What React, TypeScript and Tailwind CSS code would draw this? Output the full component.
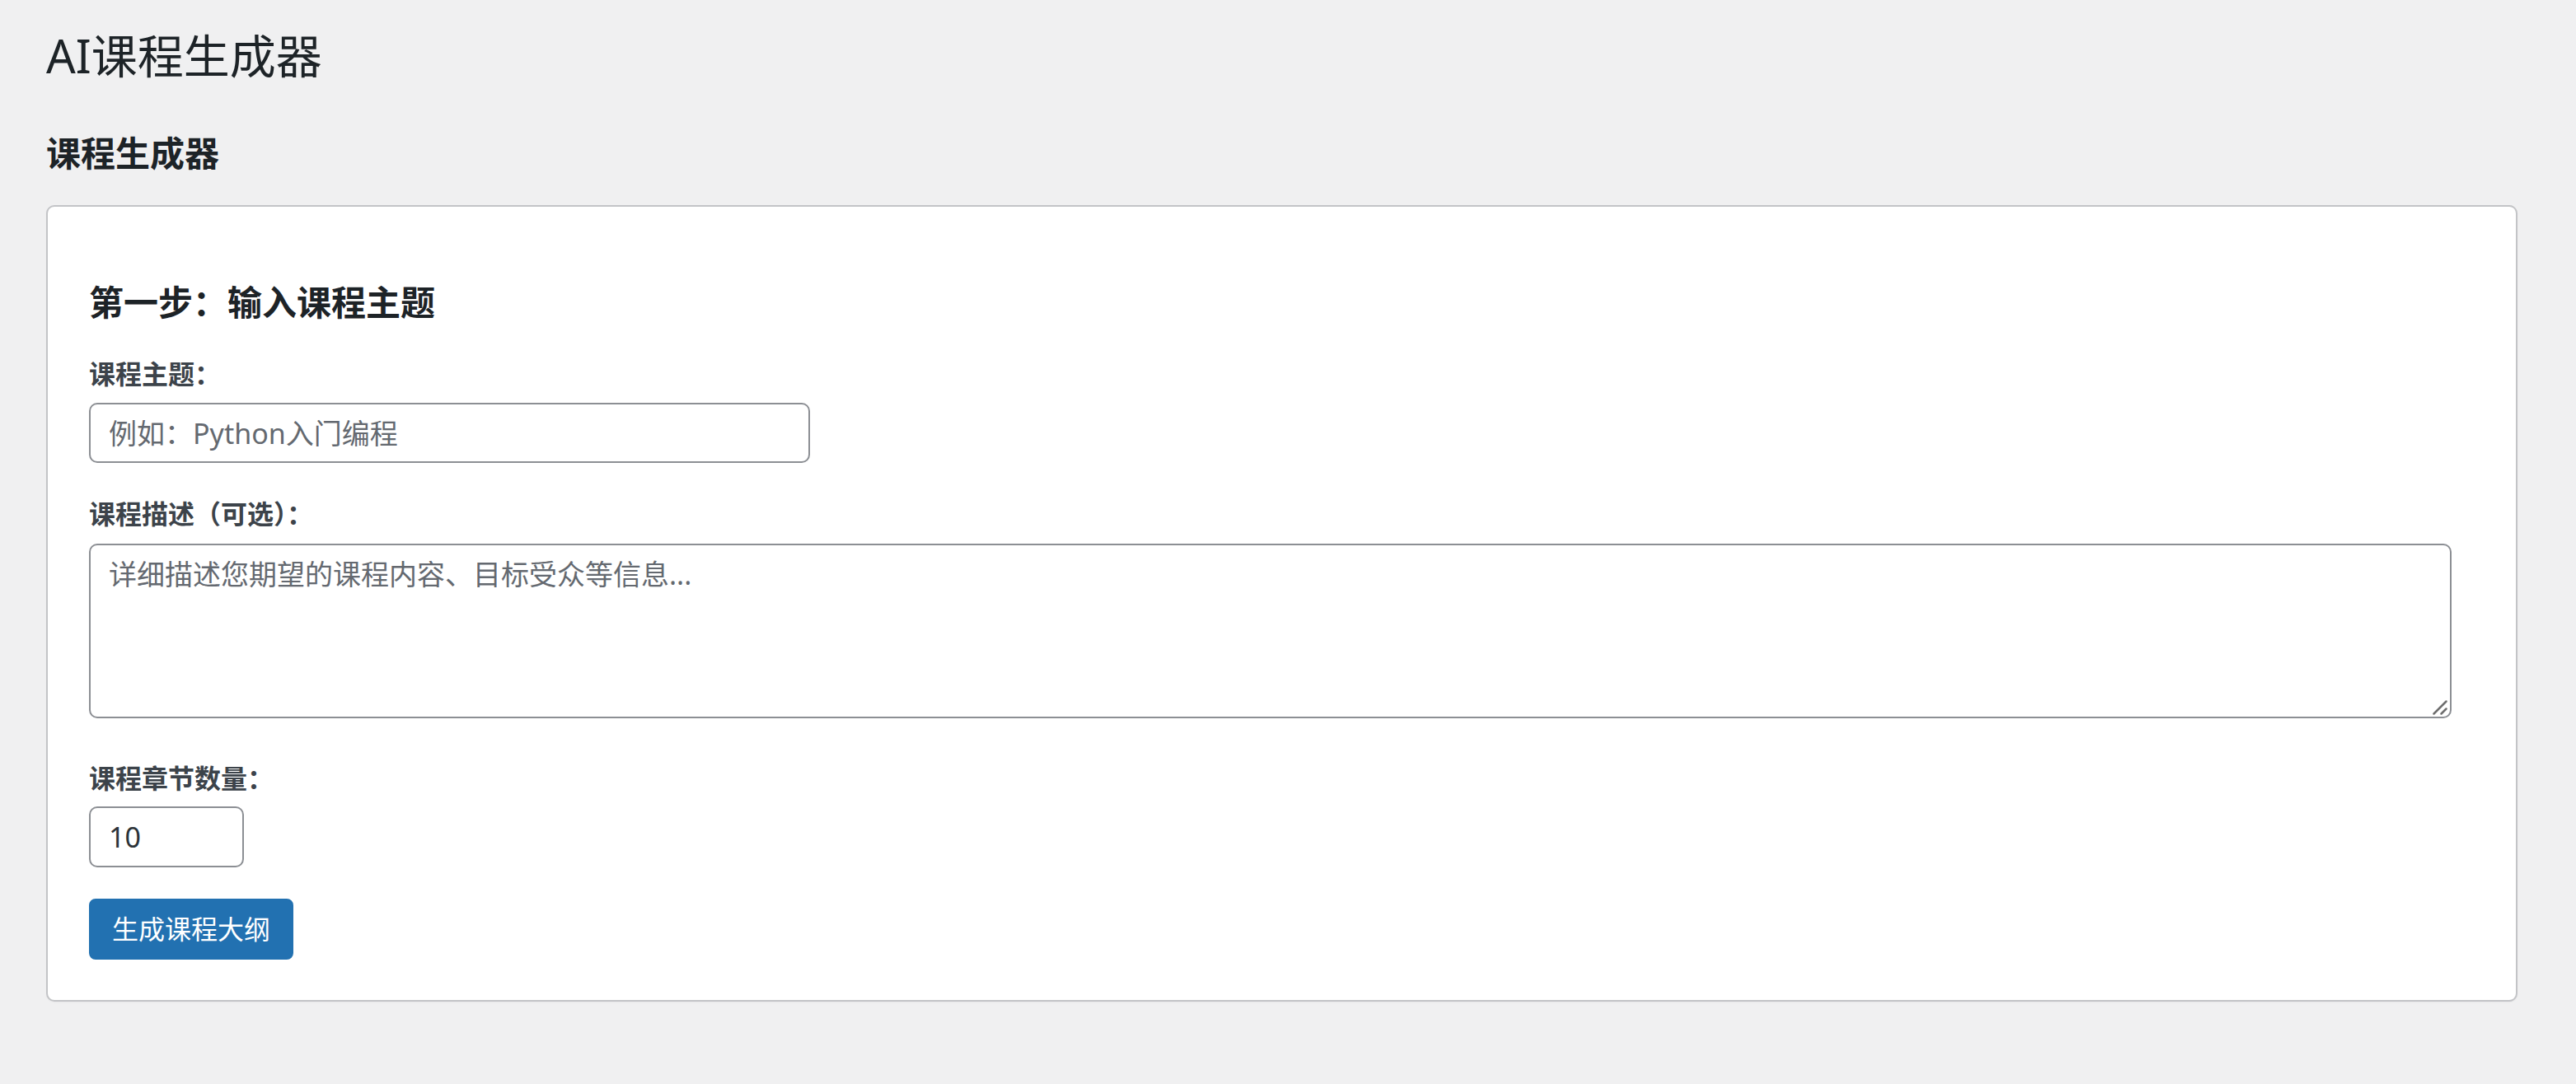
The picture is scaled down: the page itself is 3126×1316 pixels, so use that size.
import React from 'react';

const FONT = "font-['Noto_Sans','Noto_Sans_CJK_SC',sans-serif]";

function ResizeGrip() {
  return (
    <svg
      className="pointer-events-none absolute right-[5px] bottom-[4px]"
      width="18"
      height="18"
      viewBox="0 0 18 18"
      fill="none"
      stroke="#6e6e6e"
      strokeWidth="2.5"
      strokeLinecap="round"
    >
      <line x1="1.5" y1="16.5" x2="16.5" y2="1.5" />
      <line x1="10.5" y1="16.5" x2="16.5" y2="10.5" />
    </svg>
  );
}

export default function App() {
  return (
    <div className={`min-h-screen bg-[#f0f0f1] pl-[56px] pr-[71px] pt-[31px] text-[#1d2327] ${FONT}`}>
      <h1 className="text-[56px] leading-[72px] font-normal text-[#1d2327]">AI课程生成器</h1>

      <h2 className="mt-[56px] text-[42px] leading-[54px] font-bold text-[#1d2327]">课程生成器</h2>

      <div className="mt-[36px] rounded-[10px] border-2 border-[#c3c4c7] bg-white px-[50px] pt-[50px] pb-[49px] shadow-[0_1px_2px_rgba(0,0,0,0.04)]">
        <h3 className="mt-[39px] text-[42px] leading-[54px] font-bold text-[#1d2327]">第一步：输入课程主题</h3>

        <label className="mt-[38px] block text-[32px] leading-[44px] font-bold text-[#3c434a]">课程主题：</label>
        <input
          type="text"
          placeholder="例如：Python入门编程"
          className="mt-[13px] block h-[73px] w-[875px] rounded-[10px] border-2 border-[#8c8f94] bg-white px-[22px] text-[34px] text-[#2c3338] placeholder:text-[#646970] outline-none"
        />

        <label className="mt-[40px] block text-[32px] leading-[44px] font-bold text-[#3c434a]">课程描述（可选）：</label>
        <div className="relative mt-[14px] w-[2867px]">
          <textarea
            placeholder="详细描述您期望的课程内容、目标受众等信息..."
            className="block h-[212px] w-full resize-none rounded-[10px] border-2 border-[#8c8f94] bg-white px-[22px] py-[10px] text-[34px] leading-[50px] text-[#2c3338] placeholder:text-[#646970] outline-none"
          />
          <ResizeGrip />
        </div>

        <label className="mt-[51px] block text-[32px] leading-[44px] font-bold text-[#3c434a]">课程章节数量：</label>
        <input
          type="number"
          defaultValue={10}
          className="mt-[12px] block h-[74px] w-[188px] rounded-[10px] border-2 border-[#8c8f94] bg-white px-[22px] text-[34px] text-[#2c3338] outline-none"
        />

        <button
          type="button"
          className="mt-[38px] flex h-[74px] items-center rounded-[8px] border-2 border-[#2271b1] bg-[#2271b1] px-[26px] text-[32px] text-white"
        >
          生成课程大纲
        </button>
      </div>
    </div>
  );
}
